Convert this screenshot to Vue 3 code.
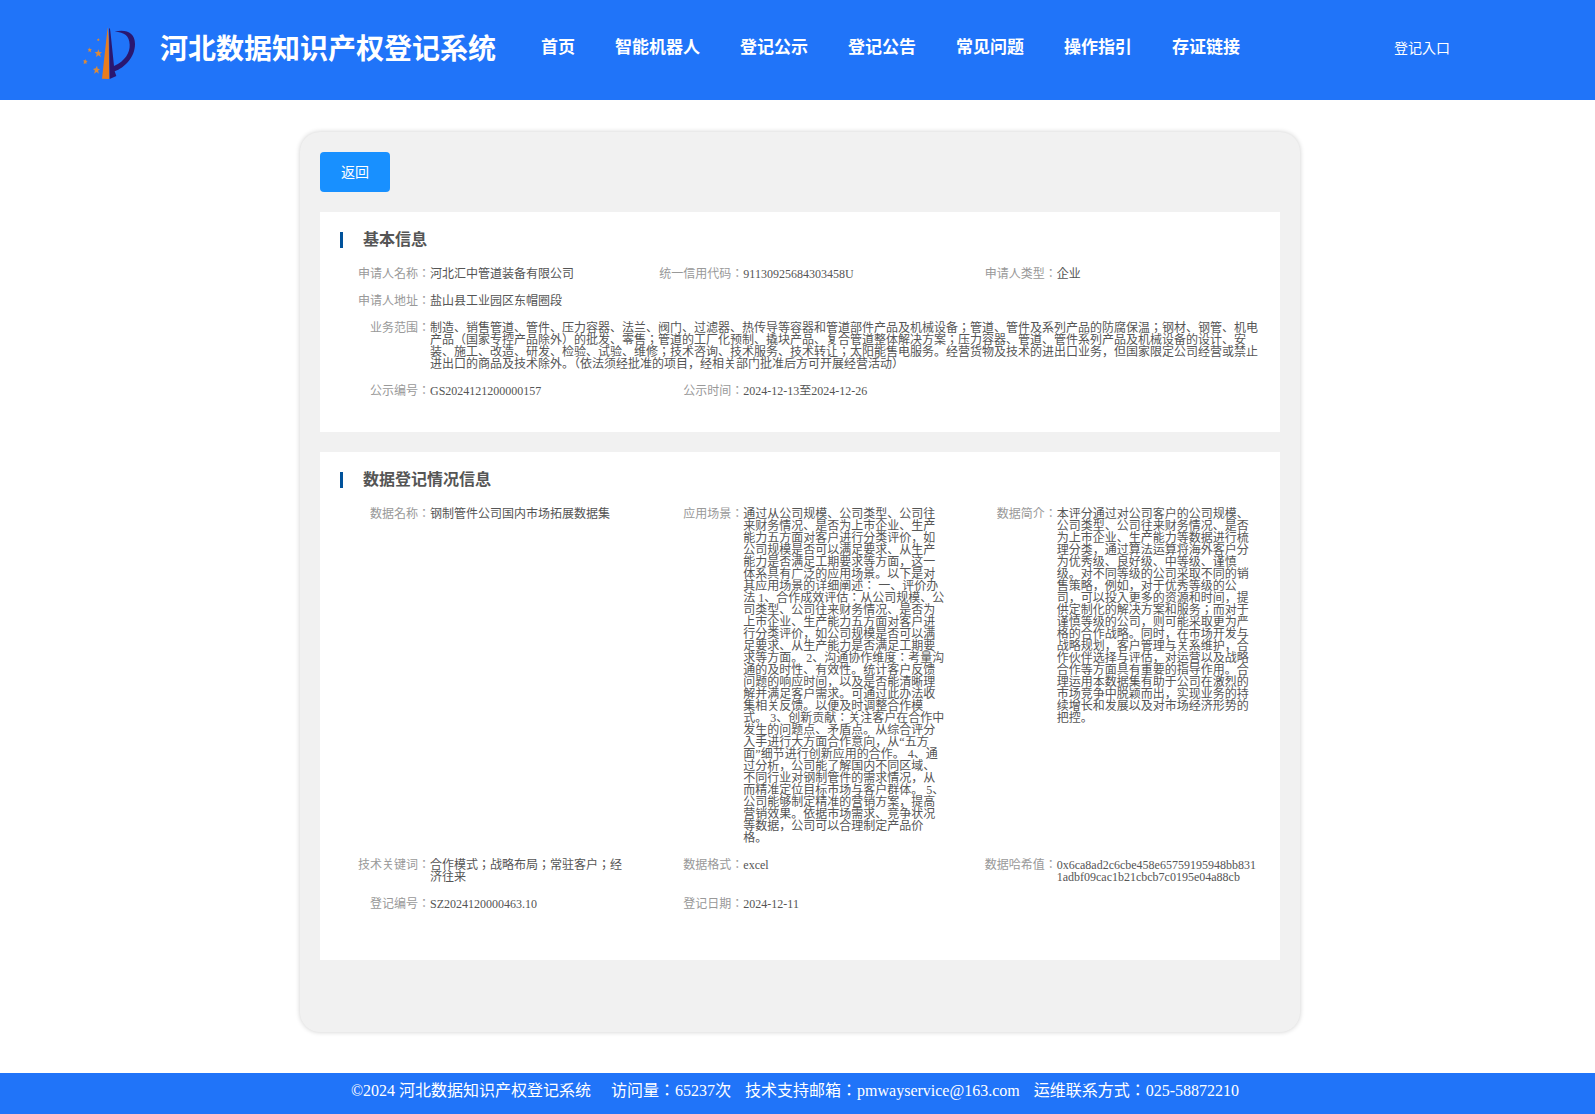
<script setup>
const navItems = ['首页', '智能机器人', '登记公示', '登记公告', '常见问题', '操作指引', '存证链接']

const sections = [
  {
    title: '基本信息',
    kind: 'basic',
    fields: [
      { label: '申请人名称', value: '河北汇中管道装备有限公司' },
      { label: '统一信用代码', value: '91130925684303458U' },
      { label: '申请人类型', value: '企业' },
      { label: '申请人地址', value: '盐山县工业园区东帽圈段', wide: true },
      {
        label: '业务范围',
        value: '制造、销售管道、管件、压力容器、法兰、阀门、过滤器、热传导等容器和管道部件产品及机械设备；管道、管件及系列产品的防腐保温；钢材、钢管、机电产品（国家专控产品除外）的批发、零售；管道的工厂化预制、撬块产品、复合管道整体解决方案；压力容器、管道、管件系列产品及机械设备的设计、安装、施工、改造、研发、检验、试验、维修；技术咨询、技术服务、技术转让；太阳能售电服务。经营货物及技术的进出口业务，但国家限定公司经营或禁止进出口的商品及技术除外。（依法须经批准的项目，经相关部门批准后方可开展经营活动）',
        wide: true
      },
      { label: '公示编号', value: 'GS2024121200000157' },
      { label: '公示时间', value: '2024-12-13至2024-12-26' }
    ]
  },
  {
    title: '数据登记情况信息',
    kind: 'data',
    fields: [
      { label: '数据名称', value: '钢制管件公司国内市场拓展数据集' },
      {
        label: '应用场景',
        value: '通过从公司规模、公司类型、公司往来财务情况、是否为上市企业、生产能力五方面对客户进行分类评价，如公司规模是否可以满足要求、从生产能力是否满足工期要求等方面，这一体系具有广泛的应用场景。以下是对其应用场景的详细阐述： 一、评价办法 1、合作成效评估：从公司规模、公司类型、公司往来财务情况、是否为上市企业、生产能力五方面对客户进行分类评价，如公司规模是否可以满足要求、从生产能力是否满足工期要求等方面。 2、沟通协作维度：考量沟通的及时性、有效性。统计客户反馈问题的响应时间，以及是否能清晰理解并满足客户需求。可通过此办法收集相关反馈。以便及时调整合作模式。 3、创新贡献：关注客户在合作中发生的问题点、矛盾点。从综合评分入手进行大方面合作意向，从“五方面”细节进行创新应用的合作。 4、通过分析，公司能了解国内不同区域、不同行业对钢制管件的需求情况，从而精准定位目标市场与客户群体。 5、公司能够制定精准的营销方案，提高营销效果。依据市场需求、竞争状况等数据，公司可以合理制定产品价格。'
      },
      {
        label: '数据简介',
        value: '本评分通过对公司客户的公司规模、公司类型、公司往来财务情况、是否为上市企业、生产能力等数据进行梳理分类，通过算法运算将海外客户分为优秀级、良好级、中等级、谨慎级。对不同等级的公司采取不同的销售策略，例如，对于优秀等级的公司，可以投入更多的资源和时间，提供定制化的解决方案和服务；而对于谨慎等级的公司，则可能采取更为严格的合作战略。同时，在市场开发与战略规划，客户管理与关系维护，合作伙伴选择与评估，对运营以及战略合作等方面具有重要的指导作用。合理运用本数据集有助于公司在激烈的市场竞争中脱颖而出，实现业务的持续增长和发展以及对市场经济形势的把控。'
      },
      { label: '技术关键词', value: '合作模式；战略布局；常驻客户；经济往来' },
      { label: '数据格式', value: 'excel' },
      { label: '数据哈希值', value: '0x6ca8ad2c6cbe458e65759195948bb8311adbf09cac1b21cbcb7c0195e04a88cb' },
      { label: '登记编号', value: 'SZ2024120000463.10' },
      { label: '登记日期', value: '2024-12-11' }
    ]
  }
]
</script>

<template>
  <div class="page">
    <header class="header">
      <svg class="logo" viewBox="0 0 210 180" aria-hidden="true">
        <path d="M95 22 L98 60 L100 177 L78 176 Z" fill="#e87d1e" />
        <path d="M99 24 C102 24 103 30 104 42 L114 138 C148 122 162 98 161 74 C160 46 146 37 116 35 C150 27 177 38 177 72 C177 112 146 143 116 154 L121 168 L101 177 Z" fill="#2a1770" />
        <g fill="#d98a3c">
          <path d="M67 88 L70 96 L78 97 L72 102 L75 111 L67 106 L60 111 L62 102 L56 96 L64 96 Z" />
          <path d="M63 137 L65 146 L72 147 L66 152 L69 161 L62 156 L54 161 L57 152 L51 147 L59 145 Z" />
          <path d="M41 82 L43 87 L48 88 L44 91 L46 97 L41 94 L37 96 L38 91 L35 86 L40 87 Z" />
          <path d="M28 116 L30 122 L35 123 L31 127 L32 132 L28 130 L23 132 L24 126 L22 121 L27 121 Z" />
          <path d="M67 54 L68 57 L71 58 L69 60 L70 63 L67 62 L64 63 L65 60 L63 57 L66 57 Z" />
        </g>
      </svg>
      <h1 class="site-title">河北数据知识产权登记系统</h1>
      <nav class="nav">
        <a v-for="item in navItems" :key="item" href="#">{{ item }}</a>
      </nav>
      <a class="login" href="#">登记入口</a>
    </header>

    <main class="main">
      <div class="panel">
        <button type="button" class="back">返回</button>
        <section v-for="section in sections" :key="section.title" class="card" :class="section.kind">
          <h2 class="card-title">{{ section.title }}</h2>
          <dl class="fields">
            <div v-for="field in section.fields" :key="field.label" class="field" :class="{ wide: field.wide }">
              <dt>{{ field.label }}：</dt>
              <dd>{{ field.value }}</dd>
            </div>
          </dl>
        </section>
      </div>
    </main>

    <footer class="footer">
      <span class="copyright">©2024 河北数据知识产权登记系统</span>
      <span>访问量：65237次</span>
      <span>技术支持邮箱：pmwayservice@163.com</span>
      <span>运维联系方式：025-58872210</span>
    </footer>
  </div>
</template>

<style>
body {
  margin: 0;
  background: #fff;
}
</style>

<style scoped>
.page {
  font-family: "Liberation Serif", "Noto Sans CJK JP", serif;
  color: #555;
}

.header {
  display: flex;
  align-items: center;
  box-sizing: border-box;
  height: 100px;
  padding: 0 145px 0 76px;
  background: #2074f9;
  color: #fff;
}

.header a {
  color: inherit;
  text-decoration: none;
  white-space: nowrap;
}

.logo {
  flex: none;
  width: 70px;
  height: 60px;
  margin-right: 14px;
}

.site-title {
  margin: 0 45px 0 0;
  font-size: 28px;
  line-height: 40px;
  white-space: nowrap;
}

.nav {
  display: flex;
  gap: 40px;
  margin-bottom: 4px;
  font-size: 17px;
  font-weight: bold;
  line-height: 24px;
}

.login {
  margin: 0 0 2px auto;
  font-size: 14px;
  line-height: 20px;
}

.main {
  padding: 32px 0 41px 5px;
}

.panel {
  display: flex;
  flex-direction: column;
  align-items: stretch;
  gap: 20px;
  box-sizing: border-box;
  max-width: 1000px;
  margin: 0 auto;
  padding: 20px 20px 72px;
  border-radius: 20px;
  background: #f1f1f1;
  box-shadow: 0 0 5px rgba(0, 0, 0, 0.2);
}

.back {
  align-self: flex-start;
  width: 70px;
  height: 40px;
  padding: 0 0 2px;
  border: 0;
  border-radius: 4px;
  background: #1890ff;
  color: #fff;
  font-family: inherit;
  font-size: 14px;
  cursor: pointer;
}

.card {
  padding: 20px 0 0 20px;
  background: #fff;
}

.basic {
  padding-bottom: 35px;
}

.data {
  padding-bottom: 50px;
}

.card-title {
  margin: 0 0 20px;
  padding-left: 20px;
  border-left: 3px solid #00529b;
  font-size: 16px;
  line-height: 16px;
}

.fields {
  display: grid;
  grid-template-columns: repeat(3, 1fr);
  row-gap: 15px;
  margin: 0;
  font-size: 12px;
  line-height: 12px;
}

.field {
  display: flex;
  min-width: 0;
  padding-right: 20px;
}

.wide {
  grid-column: 1 / -1;
}

.field dt {
  flex: none;
  width: 90px;
  color: #999;
  text-align: right;
}

.field dd {
  flex: 1;
  min-width: 0;
  margin: 0;
  word-break: break-word;
}

.footer {
  display: flex;
  justify-content: center;
  gap: 14px;
  padding: 0 5px 5px 0;
  background: #2074f9;
  color: #fff;
  font-size: 16px;
  line-height: 36px;
}

.copyright {
  margin-right: 6px;
}
</style>
